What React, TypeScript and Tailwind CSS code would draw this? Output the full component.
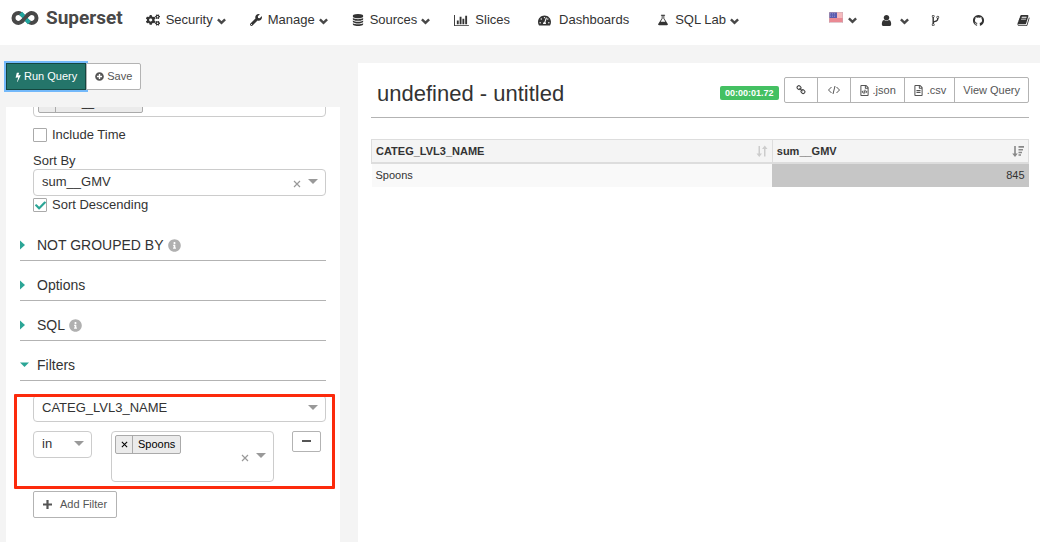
import type { ReactNode } from 'react';
import { FaCogs, FaWrench, FaTachometerAlt, FaPlusCircle, FaInfoCircle, FaCheck, FaRegFileCode, FaRegFileAlt } from 'react-icons/fa';

type GlyphProps = { d: string; className?: string; viewBox?: string };

function Glyph({ d, className = 'size-3.5', viewBox = '0 0 1792 1792' }: GlyphProps) {
  return (
    <svg viewBox={viewBox} className={`shrink-0 ${className}`} fill="currentColor" aria-hidden="true">
      <path d={d} />
    </svg>
  );
}

const paths = {
  bolt: 'M1333 566q18 20 7 44l-540 1157q-13 25-42 25-4 0-14-2-17-5-25.500-19t-4.500-30l197-808-406 101q-4 1-12 1-18 0-31-11-18-15-13-39l201-825q4-16 18-27t32-11h328q19 0 32 12.500t13 29.500q0 8-5 18l-171 463 396-98q8-2 12-2 19 0 34 15z',
  database:
    'M896 768q237 0 443-43t325-127v170q0 69-103 128t-280 93.500-385 34.500-385-34.500-280-93.500-103-128v-170q119 84 325 127t443 43zm0 768q237 0 443-43t325-127v170q0 69-103 128t-280 93.500-385 34.500-385-34.500-280-93.500-103-128v-170q119 84 325 127t443 43zm0-384q237 0 443-43t325-127v170q0 69-103 128t-280 93.500-385 34.500-385-34.500-280-93.500-103-128v-170q119 84 325 127t443 43zm0-1152q208 0 385 34.500t280 93.500 103 128v128q0 69-103 128t-280 93.500-385 34.500-385-34.500-280-93.500-103-128v-128q0-69 103-128t280-93.500 385-34.500z',
  bars: 'M640 896v512h-256v-512h256zm384-512v1024h-256v-1024h256zm1024 1152v128h-2048v-1536h128v1408h1920zm-640-896v768h-256v-768h256zm384-384v1152h-256v-1152h256z',
  flask:
    'M1591 1448q56 89 21.500 152.500t-140.500 63.500h-1152q-106 0-140.500-63.500t21.500-152.500l503-793v-399h-64q-26 0-45-19t-19-45 19-45 45-19h512q26 0 45 19t19 45-19 45-45 19h-64v399zm-779-725l-272 429h712l-272-429-20-31v-436h-128v436z',
  user: 'M1536 1399q0 109-62.500 187t-150.500 78h-854q-88 0-150.500-78t-62.500-187q0-85 8.500-160.500t31.500-152 58.500-131 94-89 134.500-34.500q131 128 313 128t313-128q76 0 134.500 34.500t94 89 58.500 131 31.500 152 8.500 160.500zm-256-887q0 159-112.500 271.500t-271.500 112.500-271.500-112.500-112.500-271.500 112.500-271.500 271.500-112.500 271.500 112.500 112.500 271.500z',
  fork: 'M672 1472q0-40-28-68t-68-28-68 28-28 68 28 68 68 28 68-28 28-68zm0-1152q0-40-28-68t-68-28-68 28-28 68 28 68 68 28 68-28 28-68zm640 128q0-40-28-68t-68-28-68 28-28 68 28 68 68 28 68-28 28-68zm96 0q0 52-26 96.500t-70 69.500q-2 287-226 414-67 38-203 81-128 40-169.500 71t-41.500 100v26q44 25 70 69.500t26 96.500q0 80-56 136t-136 56-136-56-56-136q0-52 26-96.500t70-69.500v-820q-44-25-70-69.500t-26-96.500q0-80 56-136t136-56 136 56 56 136q0 52-26 96.500t-70 69.500v497q54-26 154-57 55-17 87.500-29.500t70.500-31 59-39.500 40.500-51 28-69.500 8.500-91.500q-44-25-70-69.500t-26-96.500q0-80 56-136t136-56 136 56 56 136z',
  github:
    'M896 128q209 0 385.500 103t279.500 279.500 103 385.500q0 251-146.500 451.500t-378.500 274.500q-27 5-40-7t-13-30q0-3 .5-76.500t.5-134.500q0-97-52-142 57-6 102.500-18t94-39 81-66.500 53-105 20.500-150.500q0-119-79-206 37-91-8-204-28-9-81 11t-92 44l-38 24q-93-26-192-26t-192 26q-16-11-42.500-27t-83.500-38.500-85-13.500q-45 113-8 204-79 87-79 206 0 85 20.500 150t52.500 105 80.500 67 94 39 102.500 18q-39 36-49 103-21 10-45 15t-57 5-65.500-21.500-55.500-62.500q-19-32-48.500-52t-49.500-24l-20-3q-21 0-29 4.500t-5 11.500 9 14 13 12l7 5q22 10 43.500 38t31.500 51l10 23q13 38 44 61.500t67 30 69.500 7 55.500-3.500l23-4q0 38 .5 88.500t.5 54.500q0 18-13 30t-40 7q-232-74-378.500-274.500t-146.500-451.500q0-209 103-385.500t279.500-279.500 385.500-103z',
  book: 'M1703 478q40 57 18 129l-275 906q-19 64-76.500 107.500t-122.500 43.500h-923q-77 0-148.500-53.500t-99.500-131.500q-24-67-2-127 0-4 3-27t4-37q1-8-3-21.500t-3-19.500q2-11 8-21t16.500-23.500 16.500-23.500q23-38 45-91.500t30-91.500q3-10 .5-30t-.5-28q3-11 17-28t17-23q21-36 42-92t25-90q1-9-2.500-32t.5-28q4-13 22-30.500t22-22.500q19-26 42.500-84.500t27.500-96.500q1-8-3-25.500t-2-26.500q2-8 9-18t18-23 17-21q8-12 16.500-30.500t15-35 16-36 19.500-32 26.500-23.500 36-11.500 47.500 5.500l-1 3q38-9 51-9h761q74 0 114 56t18 130l-274 906q-36 119-71.500 153.500t-128.500 34.500h-869q-27 0-38 15-11 16-1 43 24 70 144 70h923q29 0 56-15.500t35-41.500l300-987q7-22 5-57 38 15 59 43zm-1064 2q-4 13 2 22.500t20 9.500h608q13 0 25.500-9.500t16.500-22.500l21-64q4-13-2-22.500t-20-9.500h-608q-13 0-25.500 9.500t-16.500 22.500zm-83 256q-4 13 2 22.500t20 9.500h608q13 0 25.500-9.500t16.500-22.500l21-64q4-13-2-22.500t-20-9.500h-608q-13 0-25.500 9.500t-16.500 22.500z',
  chain:
    'M1520 1216q0-40-28-68l-208-208q-28-28-68-28-42 0-72 32 3 3 19 18.500t21.500 21.500 15 19 13 25.500 3.500 27.500q0 40-28 68t-68 28q-15 0-27.500-3.500t-25.500-13-19-15-21.500-21.500-18.500-19q-33 31-33 73 0 40 28 68l206 207q27 27 68 27 40 0 68-26l147-146q28-28 28-67zm-703-705q0-40-28-68l-206-207q-28-28-68-28-39 0-68 27l-147 146q-28 28-28 67 0 40 28 68l208 208q27 27 68 27 42 0 72-31-3-3-19-18.500t-21.500-21.500-15-19-13-25.500-3.500-27.500q0-40 28-68t68-28q15 0 27.500 3.500t25.500 13 19 15 21.500 21.500 18.500 19q33-31 33-73zm895 705q0 120-85 203l-147 146q-83 83-203 83-121 0-204-85l-206-207q-83-83-83-203 0-123 88-209l-88-88q-86 88-208 88-120 0-204-84l-208-208q-84-84-84-204t85-203l147-146q83-83 203-83 121 0 204 85l206 207q83 83 83 203 0 123-88 209l88 88q86-88 208-88 120 0 204 84l208 208q84 84 84 204z',
};

function Logo() {
  return (
    <svg viewBox="0 0 28 16" className="h-4 w-7 shrink-0" fill="none" strokeWidth="4" aria-hidden="true">
      <path d="M14 8C11.500 5 10 3 7.500 3a5 5 0 0 0 0 10C10 13 11.500 11 14 8" stroke="#484848" />
      <path d="M14 8C16.500 5 18 3 20.500 3a5 5 0 0 1 0 10C18 13 16.500 11 14 8" stroke="#484848" />
      <path d="M9.700 3.200 18.300 12.800" stroke="#20a7a0" />
      <path d="M10.500 12 17.500 4" stroke="#484848" strokeWidth="3.600" />
    </svg>
  );
}

function Flag() {
  return (
    <svg viewBox="0 0 14 11" className="mb-1.5 h-[11px] w-3.5 shrink-0" role="img" aria-label="English">
      <rect width="14" height="11" fill="#fbe9ea" />
      <path d="M0 1h14M0 3h14M0 5h14" stroke="#f08a90" />
      <path d="M0 7h14M0 9h14" stroke="#d92b3c" />
      <rect width="8" height="6" fill="#5a5cae" />
      <path d="M1 1.500h6M1 3h6M1 4.500h6" stroke="#9a9cd6" strokeWidth=".6" strokeDasharray="1 1" />
      <rect x=".25" y=".25" width="13.500" height="10.500" fill="none" stroke="#c9a9b4" strokeWidth=".5" />
    </svg>
  );
}

function Chevron({ className = '' }: { className?: string }) {
  return (
    <svg viewBox="0 0 9 7" className={`h-[7px] w-[9px] shrink-0 ${className}`} fill="none" stroke="#484848" strokeWidth="2.400" aria-hidden="true">
      <path d="M.9 1.300 4.500 4.900l3.600-3.600" />
    </svg>
  );
}

function NavLink({ icon, label, menu = false }: { icon: ReactNode; label: string; menu?: boolean }) {
  return (
    <a href="#" className={`flex items-center text-[13px] whitespace-nowrap ${menu ? 'mr-6' : 'mr-7'}`}>
      {icon}
      <span className="ml-1.5">{label}</span>
      {menu && <Chevron className="mt-[3px] ml-1" />}
    </a>
  );
}

function Caret() {
  return (
    <svg viewBox="0 0 10 5" className="pointer-events-none mb-0.5 h-[5px] w-2.5 shrink-0 fill-[#999]" aria-hidden="true">
      <path d="M0 0h10L5 5z" />
    </svg>
  );
}

function ClearButton({ label }: { label: string }) {
  return (
    <button type="button" aria-label={label} className="text-[#999]">
      <svg viewBox="0 0 8 8" className="mt-0.5 size-2" stroke="currentColor" strokeWidth="1.200" aria-hidden="true">
        <path d="m1 1 6 6M7 1 1 7" />
      </svg>
    </button>
  );
}

function SelectBox({ id, label, value, clearable = false }: { id: string; label?: string; value: string; clearable?: boolean }) {
  return (
    <div className="flex h-[27px] items-center gap-[7px] rounded border border-[#ccc] bg-white pr-[7px]">
      <select id={id} aria-label={label} className="h-full min-w-0 flex-1 appearance-none bg-transparent pb-0.5 pl-2 text-[13px] text-[#333] outline-none">
        <option>{value}</option>
      </select>
      {clearable && <ClearButton label="Clear value" />}
      <Caret />
    </div>
  );
}

function CheckField({ id, label, checked = false }: { id: string; label: string; checked?: boolean }) {
  return (
    <div className="flex h-[18px] items-center gap-[5px]">
      <span className="grid size-3.5 place-items-center">
        <input
          id={id}
          type="checkbox"
          defaultChecked={checked}
          className="peer col-start-1 row-start-1 size-3.5 appearance-none rounded-[1px] border border-[#aaa] bg-white"
        />
        <FaCheck className="pointer-events-none invisible col-start-1 row-start-1 size-[11px] text-[#2ba596] peer-checked:visible" />
      </span>
      <label htmlFor={id} className="text-[13px]">
        {label}
      </label>
    </div>
  );
}

function Tag({ label, className = '' }: { label: string; className?: string }) {
  return (
    <span className={`flex h-[19px] items-stretch rounded-[2px] border border-[#aaa] bg-[#ebebeb] text-[11px] text-black ${className}`}>
      <button type="button" aria-label={`Remove ${label}`} className="flex w-[17px] items-center justify-center border-r border-[#aaa]">
        <svg viewBox="0 0 8 8" className="size-[7px]" stroke="currentColor" strokeWidth="1.200" aria-hidden="true">
          <path d="m1 1 6 6M7 1 1 7" />
        </svg>
      </button>
      <span className="flex items-center px-[5px]">{label}</span>
    </span>
  );
}

function Section({ title, info = false, open = false }: { title: string; info?: boolean; open?: boolean }) {
  return (
    <h2 className="flex h-10 border-b border-[#b3b3b3] pt-[9px]">
      <button type="button" aria-expanded={open} className="flex w-full items-center text-sm">
        <span className="flex w-[17px] shrink-0">
          <svg viewBox="0 0 10 10" className="size-2.5 fill-[#2ba596]" aria-hidden="true">
            {open ? <path d="M0 2.500h9L4.500 7z" /> : <path d="M0 .5v9L5 5z" />}
          </svg>
        </span>
        {title}
        {info && <FaInfoCircle className="ml-1 size-[13px] text-[#b0b0b0]" />}
      </button>
    </h2>
  );
}

const toolButton = 'flex items-center justify-center border-r border-[#b3b3b3] last:border-r-0 whitespace-nowrap px-2';

function Toolbar() {
  return (
    <div className="flex h-[26px] rounded-[2px] border border-[#b3b3b3] bg-white text-[11px] text-[#555]">
      <button type="button" aria-label="Short link" className={toolButton}>
        <Glyph d={paths.chain} className="mx-[3px] size-2.5 text-[#444]" />
      </button>
      <button type="button" aria-label="Embed code" className={toolButton}>
        <svg viewBox="0 0 16 10" className="h-2.5 w-4" fill="none" stroke="currentColor" aria-hidden="true">
          <path d="M5.500 2 2.500 5l3 3M10.500 2l3 3-3 3M9 1 7 9" />
        </svg>
      </button>
      <a href="#" className={toolButton}>
        <FaRegFileCode className="mr-[3px] size-[11px]" /> .json
      </a>
      <a href="#" className={toolButton}>
        <FaRegFileAlt className="mr-[3px] size-[11px]" /> .csv
      </a>
      <button type="button" className={toolButton}>
        View Query
      </button>
    </div>
  );
}

export default function App() {
  return (
    <div className="flex min-h-screen flex-col bg-[#f4f4f4] font-['Liberation_Sans',Arial,sans-serif] text-[#333]">
      <header className="flex h-[45px] items-center bg-white pr-[10px] pb-[5px] pl-[11px]">
        <a href="#" className="mr-[23px] flex items-center gap-[7px] pb-1 font-['Roboto',sans-serif] text-[19px] font-bold text-[#484848]">
          <Logo />
          Superset
        </a>
        <nav className="flex flex-1 items-center">
          <NavLink icon={<FaCogs className="size-3.5" />} label="Security" menu />
          <NavLink icon={<FaWrench className="size-3" />} label="Manage" menu />
          <NavLink icon={<Glyph d={paths.database} className="size-3" />} label="Sources" menu />
          <NavLink icon={<Glyph d={paths.bars} viewBox="0 0 2048 1792" className="h-[13px] w-[15px]" />} label="Slices" />
          <NavLink icon={<FaTachometerAlt className="mr-0.5 size-[13px]" />} label="Dashboards" />
          <NavLink icon={<Glyph d={paths.flask} className="size-3" />} label="SQL Lab" menu />
        </nav>
        <div className="flex items-center">
          <a href="#" className="mr-[23px] flex items-center gap-[5px]">
            <Flag />
            <Chevron />
          </a>
          <a href="#" aria-label="User" className="mr-5 flex items-center gap-[7px]">
            <Glyph d={paths.user} className="size-[13px]" />
            <Chevron className="mt-[3px]" />
          </a>
          <a href="#" aria-label="Version" className="mr-[30px]">
            <Glyph d={paths.fork} className="size-[13px]" />
          </a>
          <a href="#" aria-label="GitHub" className="mr-8">
            <Glyph d={paths.github} className="size-[13px]" />
          </a>
          <a href="#" aria-label="Documentation">
            <Glyph d={paths.book} className="size-[13px]" />
          </a>
        </div>
      </header>

      <main className="grid flex-1 grid-cols-[334px_minmax(0,1fr)] gap-[18px] pt-[18px] pl-1.5">
        <aside className="flex flex-col">
          <div className="mb-[17px] flex h-[27px] text-[11px]">
            <button
              type="button"
              className="flex items-center gap-[3px] border border-[#14463f] bg-[#24756a] px-2 text-white ring-2 ring-[#74b9fa]"
            >
              <Glyph d={paths.bolt} className="h-2.5 w-1.5" viewBox="380 0 980 1792" />
              Run Query
            </button>
            <button type="button" className="flex items-center gap-[3px] rounded-r-[2px] border border-[#b3b3b3] bg-white px-2 text-[#555]">
              <FaPlusCircle className="size-[9px]" />
              Save
            </button>
          </div>

          <div className="flex-1 overflow-hidden bg-white px-3.5 pb-6">
            <div className="pl-[13px]">
              <div className="-mt-[17px] h-[27px] rounded border border-[#ccc] p-1 pt-[3px]">
                <Tag label="sum__GMV" className="w-[105px]" />
              </div>
              <div className="mt-[9px] mb-2">
                <CheckField id="include-time" label="Include Time" />
              </div>
              <label htmlFor="sort-by" className="block text-[13px] leading-[17px]">
                Sort By
              </label>
              <SelectBox id="sort-by" value="sum__GMV" clearable />
              <CheckField id="sort-desc" label="Sort Descending" checked />
            </div>

            <div className="mt-[7px]">
              <Section title="NOT GROUPED BY" info />
              <Section title="Options" />
              <Section title="SQL" info />
              <Section title="Filters" open />
            </div>

            <div className="relative mt-3.5 pl-[13px]">
              <SelectBox id="filter-column" label="Filter column" value="CATEG_LVL3_NAME" />
              <div className="mt-[9px] flex items-start">
                <div className="w-[59px]">
                  <SelectBox id="filter-op" label="Operator" value="in" />
                </div>
                <div className="mr-[18px] ml-[19px] flex h-[51px] min-w-0 flex-1 items-center gap-[7px] rounded border border-[#ccc] pr-[7px] pl-[3px]">
                  <div className="flex flex-1 self-start pt-[3px]">
                    <Tag label="Spoons" />
                  </div>
                  <ClearButton label="Clear filter values" />
                  <Caret />
                </div>
                <button
                  type="button"
                  aria-label="Remove filter"
                  className="mr-[5px] flex h-[21px] w-[29px] items-center justify-center rounded-[2px] border border-[#b3b3b3]"
                >
                  <span className="mb-0.5 h-0.5 w-[9px] bg-[#555]" />
                </button>
              </div>
              <div className="pointer-events-none absolute -top-px -right-[9px] -bottom-[7px] -left-1.5 rounded-[1px] border-3 border-[#fc2a0c]" />
            </div>

            <button
              type="button"
              className="mt-[9px] ml-[13px] flex h-[27px] items-center gap-2 rounded-[2px] border border-[#b3b3b3] px-[9px] text-[11px] text-[#555]"
            >
              <svg viewBox="0 0 9 9" className="size-[9px]" stroke="currentColor" strokeWidth="2.200" aria-hidden="true">
                <path d="M4.500 0v9M0 4.500h9" />
              </svg>
              Add Filter
            </button>
          </div>
        </aside>

        <section className="bg-white pr-[11px] pl-[13px]">
          <div className="flex h-[55px] items-center justify-between border-b border-[#b3b3b3] pl-1.5">
            <h1 className="pt-1.5 text-[22px]">undefined - untitled</h1>
            <div className="flex items-center gap-[5px]">
              <span className="mt-1.5 rounded-[2px] bg-[#44c062] px-[5px] text-[9px] leading-[14px] font-bold text-white">00:00:01.72</span>
              <Toolbar />
            </div>
          </div>

          <table className="mt-[21px] w-full table-fixed border-collapse text-[11px]">
            <colgroup>
              <col className="w-[61%]" />
              <col />
            </colgroup>
            <thead>
              <tr className="h-[23px] bg-[#f4f4f4] text-left">
                <th className="border border-b-2 border-[#ddd] px-1">
                  <span className="flex items-center justify-between">
                    CATEG_LVL3_NAME
                    <svg viewBox="0 0 12 12" className="size-3" fill="#ccc" aria-hidden="true">
                      <path d="M2.500 1h1.500v7.500h2L3.250 12 .5 8.500h2zM8 11.500h1.500V4h2L8.750 .5 6 4h2z" />
                    </svg>
                  </span>
                </th>
                <th className="border border-b-2 border-[#ddd] px-1">
                  <span className="flex items-center justify-between">
                    sum__GMV
                    <svg viewBox="0 0 12 12" className="size-3" fill="#888" aria-hidden="true">
                      <path d="M2.200 1h1.600v7.500h2L3 12 .2 8.500h2zM6.500 1H12v1.800H6.500zM6.500 4H11v1.600H6.500zM6.500 6.700H10v1.500H6.500zM6.500 9.300H9v1.500H6.500z" />
                    </svg>
                  </span>
                </th>
              </tr>
            </thead>
            <tbody>
              <tr className="h-6">
                <td className="bg-[#f9f9f9] px-1">Spoons</td>
                <td className="bg-[#c6c6c6] px-1 text-right">845</td>
              </tr>
            </tbody>
          </table>
        </section>
      </main>
    </div>
  );
}
